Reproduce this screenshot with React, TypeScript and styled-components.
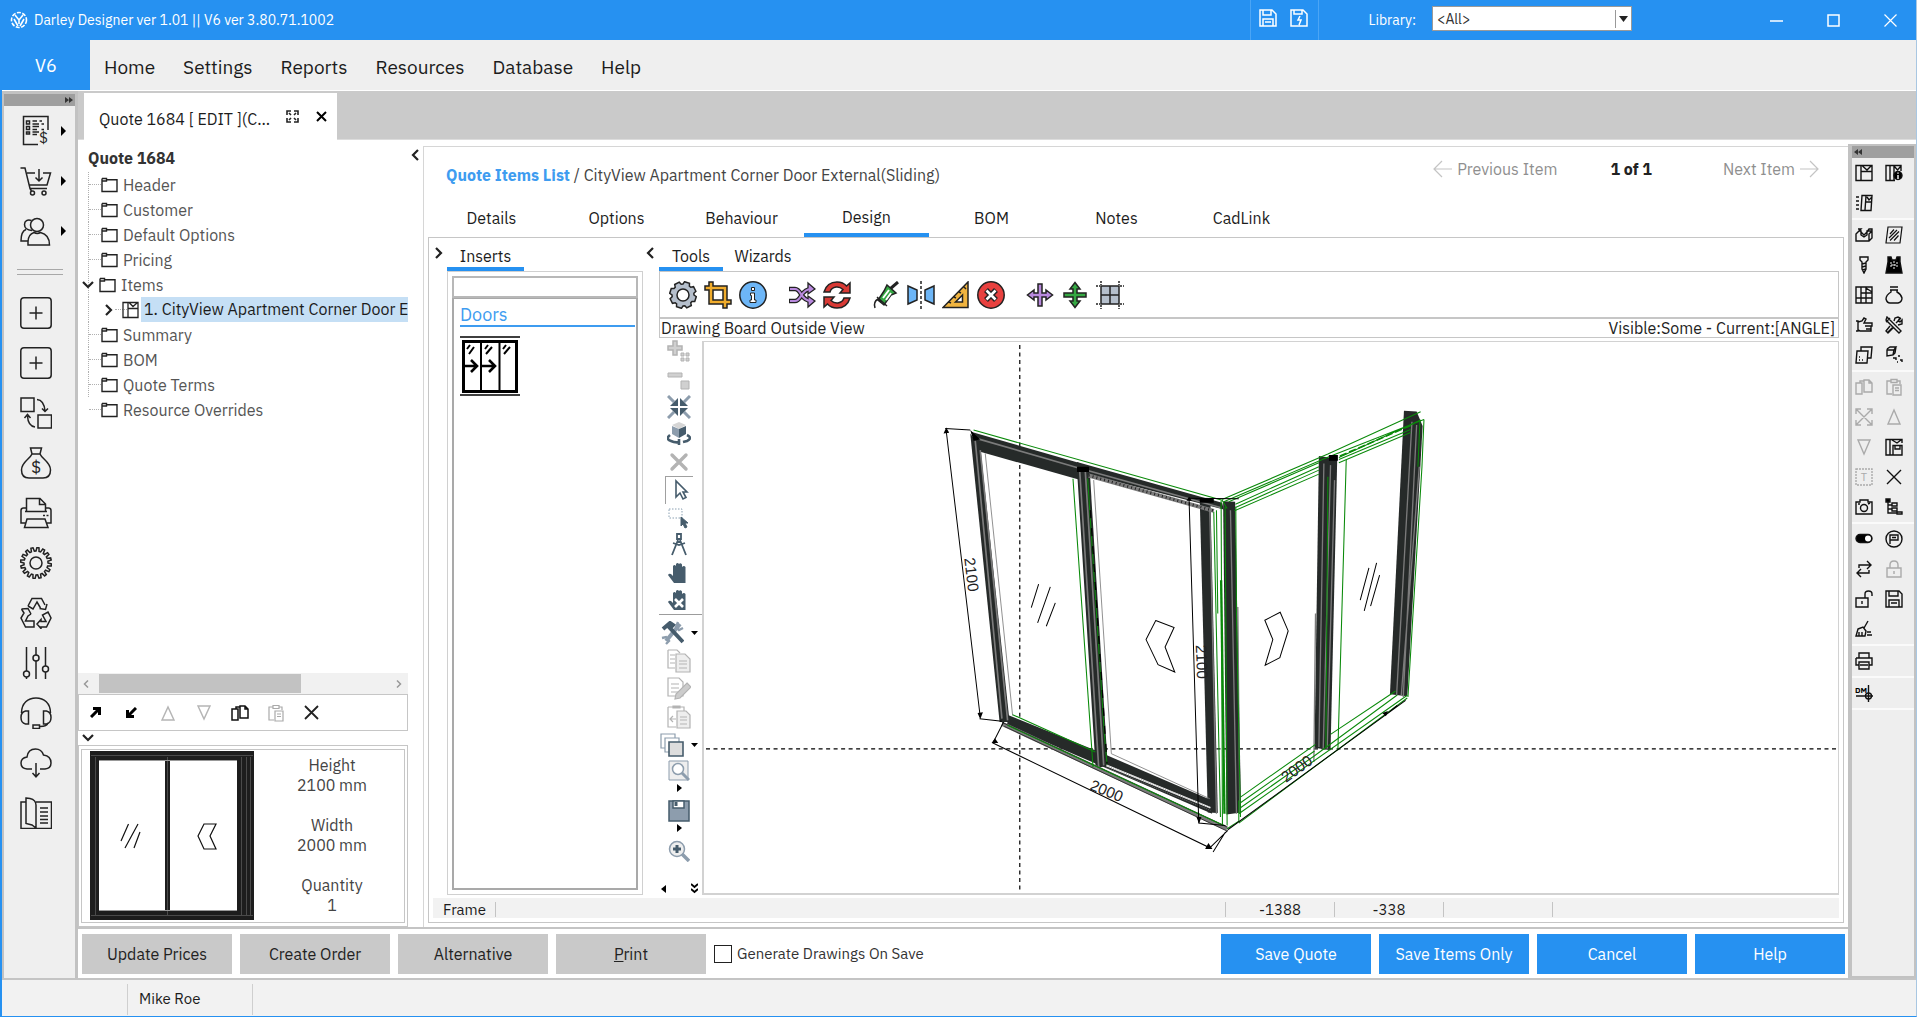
import React from "react";
import styled, { createGlobalStyle, css } from "styled-components";

const blue = "#2691f1";
const rule = "#c6c6c6";
const chrome = "#efefef";
const ink = "#1c1c1c";
const font = `"IBM Plex Sans", Roboto, "Liberation Sans", sans-serif`;

const GlobalStyle = createGlobalStyle`
  * { box-sizing: border-box; }
  body { margin: 0; background: #fff; font-family: ${font}; font-size: 16px; line-height: 20px; color: ${ink}; }
  button, input, select { font: inherit; color: inherit; }
  button { border: 0; padding: 0; background: none; }
  svg { display: block; }
  ul { list-style: none; margin: 0; padding: 0; }
`;

/* ---------- shell ---------- */
const Shell = styled.div`
  min-height: 100vh;
  display: flex;
  flex-direction: column;
  border-left: 2px solid ${blue};
  border-right: 1px solid #a9c7e2;
  border-bottom: 1px solid ${blue};
`;
const TitleBar = styled.header`
  height: 40px;
  background: ${blue};
  color: #fff;
  display: flex;
  align-items: center;
  font-size: 14px;
`;
const AppTitle = styled.div`
  display: flex;
  align-items: center;
  gap: 6px;
  padding-left: 8px;
  flex: 1;
`;
const QuickActions = styled.div`
  height: 40px;
  display: flex;
  align-items: center;
  gap: 13px;
  padding: 0 10px 4px 8px;
  border-left: 1px solid #4ba5f5;
  border-right: 1px solid #4ba5f5;
`;
const LibraryField = styled.label`
  display: flex;
  align-items: center;
  gap: 16px;
  margin: 0 113px 0 49px;
`;
const SelectBox = styled.span`
  display: grid;
  grid-template-columns: 1fr 16px;
  align-items: center;
  width: 200px;
  height: 25px;
  margin-bottom: 3px;
  background: #fff;
  border: 1px solid #9a9a9a;
  color: ${ink};
  svg { grid-area: 1 / 2; pointer-events: none; }
`;
const LibrarySelect = styled.select`
  grid-area: 1 / 1 / 2 / 3;
  appearance: none;
  border: 0;
  background: none;
  height: 23px;
  padding: 0 4px;
  color: #333;
`;
const WindowButtons = styled.div`
  display: flex;
  button { width: 57px; height: 40px; padding-left: 5px; display: grid; place-items: center; }
`;
const MenuBar = styled.nav`
  height: 51px;
  display: flex;
  background: ${chrome};
  border-bottom: 1px solid #fff;
  font-size: 19px;
`;
const Brand = styled.button`
  width: 88px;
  padding-top: 2px;
  background: ${blue};
  color: #fff;
  font-size: 18px;
`;
const MenuList = styled.div`
  display: flex;
  gap: 28px;
  padding: 3px 14px 0;
`;
const Body = styled.div`
  flex: 1;
  display: flex;
`;
const Main = styled.main`
  flex: 1;
  min-width: 0;
  display: flex;
  flex-direction: column;
`;
const Workspace = styled.div`
  flex: 1;
  display: flex;
`;
const Center = styled.div`
  flex: 1;
  min-width: 0;
  display: flex;
  flex-direction: column;
`;
const Panels = styled.div`
  flex: 1;
  display: flex;
`;

/* ---------- rails ---------- */
const LeftRail = styled.aside`
  width: 76px;
  background: ${chrome};
  border: solid #c2c2c2;
  border-width: 3px 3px 0 2px;
`;
const Grip = styled.div<{ $end?: boolean }>`
  height: 12px;
  display: flex;
  align-items: center;
  justify-content: ${(p) => (p.$end ? "flex-end" : "flex-start")};
  padding: 0 2px;
  background: #9f9f9f;
`;
const RailItem = styled.button`
  width: 71px;
  height: 50px;
  display: flex;
  align-items: center;
  gap: 9px;
  padding-left: 16px;
`;
const RailDivider = styled.div`
  height: 6px;
  margin: 13px 12px 13px 13px;
  border: solid #a8a8a8;
  border-width: 1px 0;
`;
const RightRail = styled.aside`
  width: 68px;
  margin-top: 4px;
  background: #eee;
  border: solid #c2c2c2;
  border-width: 2px 2px 2px 4px;
`;
const ToolGroup = styled.div`
  display: grid;
  grid-template-columns: 24px 36px;
  grid-auto-rows: 30px;
  border-bottom: 2px solid #fafafa;
  button { display: grid; place-items: center; }
`;

/* ---------- document tabs ---------- */
const DocTabs = styled.div`
  height: 49px;
  background: #cacaca;
  padding: 2px 0 0 6px;
  border-bottom: 1px solid #dcdcdc;
`;
const DocTab = styled.div`
  width: 253px;
  height: 47px;
  display: flex;
  align-items: center;
  padding: 4px 10px 0 15px;
  background: #fff;
  button { display: grid; place-items: center; }
`;
const DocTitle = styled.span`
  flex: 1;
`;
const DocActions = styled.span`
  display: flex;
  gap: 17px;
  padding-bottom: 4px;
`;

/* ---------- tree panel ---------- */
const TreePanel = styled.section`
  width: 330px;
  display: flex;
  flex-direction: column;
`;
const TreeTitle = styled.h2`
  margin: 0;
  padding: 8px 0 4px 10px;
  font-size: 16px;
  font-weight: 700;
  line-height: 20px;
  color: #333;
`;
const Tree = styled.ul`
  flex: 1;
  padding-left: 10px;
  color: #555;
`;
const TreeRow = styled.li<{ $last?: boolean }>`
  height: 25px;
  display: flex;
  align-items: center;
  gap: 5px;
  border-left: 1px dotted ${(p) => (p.$last ? "transparent" : "#b0b0b0")};
`;
const Twig = styled.span`
  width: 12px;
  height: 0;
  margin-right: -5px;
  border-top: 1px dotted #b0b0b0;
`;
const Expander = styled.button`
  width: 12px;
  margin-left: -7px;
`;
const ChildRow = styled.li`
  height: 25px;
  display: flex;
  align-items: center;
  border-left: 1px dotted #b0b0b0;
  padding-left: 14px;
`;
const ChildLink = styled.span`
  flex: 1;
  height: 25px;
  margin-left: 2px;
  padding-left: 3px;
  line-height: 25px;
  overflow: hidden;
  white-space: nowrap;
  background: #c5dff5;
  color: ${ink};
`;
const ScrollTrack = styled.div`
  height: 21px;
  display: flex;
  align-items: center;
  justify-content: space-between;
  padding: 0 6px 0 5px;
  background: #f1f1f1;
`;
const ScrollThumb = styled.div`
  width: 202px;
  height: 19px;
  margin: 0 auto 0 10px;
  background: #c2c2c2;
`;
const TreeTools = styled.div`
  height: 37px;
  display: flex;
  align-items: center;
  border: 1px solid ${rule};
  button { width: 36px; height: 32px; padding-right: 3px; display: grid; place-items: center; }
`;
const Collapse = styled.button`
  height: 14px;
  width: 20px;
  display: grid;
  place-items: center;
`;
const Preview = styled.div`
  display: flex;
  padding: 3px 2px;
  border: 1px solid ${rule};
`;
const PreviewInner = styled.div`
  flex: 1;
  display: flex;
  padding: 1px 0 2px 8px;
  border: 1px solid ${rule};
`;
const Facts = styled.dl`
  flex: 1;
  margin: 0;
  padding: 4px 0 0 6px;
  text-align: center;
  color: #444;
  dt { line-height: 20px; }
  dd { margin: 0 0 20px; line-height: 20px; }
  dd:last-child { margin: 0; }
`;
const SplitHandle = styled.button<{ $w?: number }>`
  width: ${(p) => p.$w || 15}px;
  height: 30px;
  display: flex;
  align-items: center;
`;

/* ---------- item panel ---------- */
const ItemPanel = styled.section`
  flex: 1;
  min-width: 0;
  margin-top: 6px;
  display: flex;
  flex-direction: column;
  border: solid #d6d6d6;
  border-width: 1px 0 0 1px;
  padding: 0 4px 4px;
`;
const ItemHeader = styled.div`
  display: flex;
  align-items: center;
  justify-content: space-between;
  height: 52px;
  padding: 2px 25px 0 18px;
`;
const Crumb = styled.div`
  padding-top: 1px;
  color: #444;
  a { color: #3e9cf0; font-weight: 700; text-decoration: none; }
`;
const Pager = styled.div`
  display: flex;
  align-items: center;
  gap: 53px;
  padding-bottom: 10px;
  strong { color: #222; padding-right: 18px; }
  button { display: flex; align-items: center; gap: 4px; color: #8f8f8f; }
`;
const ItemTabs = styled.div`
  display: flex;
  height: 38px;
  padding-left: 1px;
`;
const ItemTab = styled.button<{ $on?: boolean }>`
  width: 125px;
  padding-top: ${(p) => (p.$on ? 1 : 3)}px;
  border-bottom: 4px solid ${(p) => (p.$on ? blue : "transparent")};
`;
const ItemBody = styled.div`
  flex: 1;
  display: flex;
  flex-direction: column;
  border: 1px solid ${rule};
  padding: 0 4px 4px;
`;
const DesignArea = styled.div`
  flex: 1;
  display: flex;
`;
const InsertsColumn = styled.section`
  width: 210px;
  display: flex;
`;
const InsertsMain = styled.div`
  flex: 1;
  display: flex;
  flex-direction: column;
`;
const SubTabs = styled.div`
  display: flex;
  height: 33px;
`;
const SubTab = styled.button<{ $on?: boolean; $w: number }>`
  width: ${(p) => p.$w}px;
  padding-top: 6px;
  border-bottom: 4px solid ${(p) => (p.$on ? blue : "transparent")};
`;
const InsertsFrame = styled.div`
  flex: 1;
  display: flex;
  flex-direction: column;
  border: 1px solid #d0d0d0;
  padding: 4px;
`;
const SearchInput = styled.input`
  height: 22px;
  border: 2px solid #b8b8b8;
  width: 100%;
  outline: 0;
`;
const InsertList = styled.div`
  flex: 1;
  border: solid #a9a9a9;
  border-width: 1px 2px 2px;
  padding: 6px 1px 0 6px;
`;
const InsertGroup = styled.h3`
  margin: 0 0 9px;
  font-weight: 400;
  font-size: 18px;
  line-height: 20px;
  color: #3e9cf0;
  border-bottom: 2px solid #3e9cf0;
`;
const BoardColumn = styled.section`
  flex: 1;
  min-width: 0;
  display: flex;
  flex-direction: column;
`;
const ToolStrip = styled.div`
  height: 47px;
  display: flex;
  align-items: center;
  padding: 1px 0 0 5px;
  border: 1px solid ${rule};
  button { width: 35px; height: 40px; display: grid; place-items: center; }
`;
const StripGap = styled.span`
  width: 14px;
`;
const BoardCaption = styled.div`
  display: flex;
  justify-content: space-between;
  height: 20px;
  padding: 0 3px 0 1px;
  line-height: 19px;
  border: 1px solid ${rule};
  color: #222;
`;
const BoardRow = styled.div`
  flex: 1;
  display: flex;
`;
const BoardTools = styled.div`
  width: 43px;
  display: flex;
  flex-direction: column;
`;
const BoardGroup = styled.div<{ $h: number }>`
  height: ${(p) => p.$h}px;
  display: flex;
  flex-direction: column;
`;
const BoardDivider = styled.hr`
  width: 100%;
  margin: 0 0 4px;
  border: 0;
  border-top: 1px solid #9c9c9c;
`;
const BoardTool = styled.button<{ $down?: boolean; $menu?: boolean }>`
  flex: 1;
  display: flex;
  align-items: center;
  justify-content: ${(p) => (p.$menu ? "space-between" : "center")};
  ${(p) =>
    p.$menu
      ? css`padding: 0 4px 0 1px;`
      : css`margin: 0 9px 0 6px;`}
  ${(p) =>
    p.$down &&
    css`
      border: solid #a0a0a0;
      border-width: 1px 0 0 1px;
    `}
`;
const StackTool = styled.button`
  height: 40px;
  display: flex;
  flex-direction: column;
  align-items: center;
  gap: 2px;
  padding-right: 3px;
`;
const BoardFoot = styled.div`
  margin-top: auto;
  height: 13px;
  display: flex;
  justify-content: space-between;
  align-items: center;
  padding: 0 4px 0 2px;
`;
const Board = styled.div`
  flex: 1;
  margin-top: 3px;
  border: solid #d2d2d2;
  border-width: 1px 1px 2px 2px;
  min-width: 0;
  display: flex;
`;
const Readout = styled.div`
  display: flex;
  height: 20px;
  margin-top: 3px;
  background: #f2f2f2;
  font-size: 15px;
`;
const ReadCell = styled.span<{ $w?: number; $rule?: boolean }>`
  ${(p) => (p.$w ? css`width: ${p.$w}px;` : css`flex: 1;`)}
  height: 15px;
  margin-top: 4px;
  line-height: 15px;
  text-align: center;
  border-left: 1px solid ${(p) => (p.$rule ? "#c4c4c4" : "transparent")};
`;

/* ---------- bottom ---------- */
const ButtonBar = styled.footer`
  display: flex;
  align-items: center;
  gap: 8px;
  height: 51px;
  padding: 0 3px 0 4px;
  border-top: 2px solid #c4c4c4;
`;
const BarButton = styled.button<{ $primary?: boolean }>`
  width: 150px;
  height: 40px;
  background: ${(p) => (p.$primary ? blue : "#c9c9c9")};
  color: ${(p) => (p.$primary ? "#fff" : "#222")};
`;
const DrawingsOption = styled.label`
  flex: 1;
  display: flex;
  align-items: center;
  gap: 5px;
  font-size: 15px;
  color: #333;
  input {
    appearance: none;
    width: 18px;
    height: 18px;
    margin: 0;
    border: 1px solid #222;
    background: #fff;
  }
`;
const StatusBar = styled.footer`
  height: 38px;
  display: flex;
  align-items: stretch;
  background: #f2f2f2;
  border-top: 2px solid #c4c4c4;
  padding: 4px 0 1px;
`;
const StatusCell = styled.div<{ $w: number }>`
  width: ${(p) => p.$w}px;
  padding: 5px 11px;
  border-right: 1px solid #cfcfcf;
  font-size: 15px;
`;

/* ---------- drawings ---------- */
type SvgProps = { w?: number; h?: number; vb?: string; sw?: number; c?: string; children?: React.ReactNode };
const Svg = ({ w = 20, h = w, vb, sw = 1.5, c = "#222", children }: SvgProps) => (
  <svg width={w} height={h} viewBox={vb || `0 0 ${w} ${h}`} fill="none" stroke={c} strokeWidth={sw} aria-hidden="true">
    {children}
  </svg>
);
const gear = (cx: number, cy: number, n: number, ro: number, ri: number, duty = 0.5) => {
  const pts: string[] = [];
  for (let i = 0; i < n; i++) {
    const a = (i / n) * Math.PI * 2;
    const s = (Math.PI * 2) / n;
    [[a, ri], [a + s * 0.15, ro], [a + s * (0.15 + duty * 0.7), ro], [a + s * (0.3 + duty * 0.7), ri]].forEach(([t, r]) =>
      pts.push(`${(cx + Math.cos(t) * r).toFixed(2)} ${(cy + Math.sin(t) * r).toFixed(2)}`)
    );
  }
  return `M${pts.join("L")}Z`;
};
const Right = () => <Svg w={5} h={10}><path d="M0 0L5 5L0 10Z" fill="#000" stroke="none" /></Svg>;
const SmallRight = () => <Svg w={5} h={8}><path d="M0 0L5 4L0 8Z" fill="#000" stroke="none" /></Svg>;
const Down = () => <Svg w={7} h={4}><path d="M0 0H7L3.500 4Z" fill="#000" stroke="none" /></Svg>;
const Chevron = ({ d }: { d: "l" | "r" | "d" }) => (
  <Svg w={12} h={12} sw={2.2}>
    <path d={{ l: "M7 1L2 6L7 11", r: "M3 1L8 6L3 11", d: "M1 3L6 8L11 3" }[d]} />
  </Svg>
);
const Folder = () => (
  <Svg w={17} h={16} sw={1.4}><path d="M1 1.500H5.500V4H1M5.500 2.800H16V14.500H1V1.500" /></Svg>
);
const FrameIcon = () => (
  <Svg w={17} h={18} sw={1.3}>
    <path d="M1 1.500H16V16.500H1ZM6 1.500V16.500M6 7.500H16M7.500 2L11 5.500L15 2" />
  </Svg>
);

const railIcons: { label: string; art: React.ReactNode }[] = [
  { label: "Quotes", art: (<><path d="M18 29.500H3.500V1.500H28V15M6.500 6h3v3h-3zM6.500 11.500h3v3h-3zM6.500 17h3v2h-3zM12.500 6H17M12.500 9H19M12.500 11.500H19M12.500 14.500H17M12.500 17H19M12.500 19.500H17M19.500 6H22M21.500 9H24M21.500 14.500H24" /><text x="19" y="28" fontSize="15" fill="#222" stroke="none">$</text></>) },
  { label: "Orders", art: (<><path d="M0.500 3H5L10 23.500H27M7 8H15M23 8H30.500L27 20H9.500M19 4V16M15.500 12.500L19 16L22.500 12.500M10 23.500L11.500 26" /><circle cx="12.500" cy="28" r="2" /><circle cx="24" cy="28" r="2" /></>) },
  { label: "Customers", art: (<><circle cx="17" cy="10" r="6.500" /><path d="M8 30V27C8 21 11 18.500 14 17.500C16 18.600 18.500 18.600 20.500 17.500C27 19 29.500 23 29.500 30Z" /><path d="M12 15.500C6 15 4.500 12 4.500 9.500C4.500 6 7.500 4 11.500 5.500M6 14.500C2 16 1 20 1 26H8" /></>) },
];
const boxPlus = <path d="M4 0.800H28Q31.200 0.800 31.200 4V28Q31.200 31.200 28 31.200H4Q0.800 31.200 0.800 28V4Q0.800 0.800 4 0.800ZM16 9.500V22.500M9.500 16H22.500" />;
const railIcons2: { label: string; art: React.ReactNode }[] = [
  { label: "New quote", art: boxPlus },
  { label: "New order", art: boxPlus },
  { label: "Convert", art: <path d="M1 1H14V14.500H1ZM18 18H31.500V31H18ZM17 2.500Q24 3 25 14M22 11.500L25 14.500L28 11.500M15 30Q8 29 7.500 19M4.500 21L7.500 17.500L10.500 21" /> },
  { label: "Payments", art: (<><path d="M10.500 1H21.500L20 7H12ZM12 7C10 12 1.500 15 1.500 23C1.500 28 4 31 9 31H23C28 31 30.500 28 30.500 23C30.500 15 22 12 20 7" /><text x="16" y="26" fontSize="17" textAnchor="middle" fill="#222" stroke="none">$</text></>) },
  { label: "Print", art: <path d="M6.500 14V1.500H20L25.500 7V14M19.500 1.500V7.500H25.500M6 11H3.500Q1 11 1 13.500V26H6M26 11H28.500Q31 11 31 13.500V26H26M5 14.500H27M7 22H25L28 30.500H4.500ZM23 18.500H25M26.500 18.500H28.500" /> },
  { label: "Settings", art: (<><path d={gear(16, 16, 16, 15.5, 12)} /><circle cx="16" cy="16" r="6" /></>) },
  { label: "Recycle", art: <path d="M8 9L12 1.500H21.500L25 8M8 9L13 12L17 5L20.500 11M27 7L25.500 12.500L19.500 11.500M1.500 12L8 11.500L11 17M11 17L8 19L5.500 24H14V30H5.500L1 21L4 16L1.500 12M21 31.500L17 27L21 22.500V24.500H26L22.500 18L28 15L31 21L26.500 30H21Z" /> },
  { label: "Adjust", art: (<><path d="M6.500 0V24M6.500 30V32M16 0V8M16 14V32M25.500 0V19M25.500 25V32" /><circle cx="6.500" cy="27" r="3" /><circle cx="16" cy="11" r="3" /><circle cx="25.500" cy="22" r="3" /></>) },
  { label: "Support", art: <path d="M1.500 16C1.500 6 8 1 16 1S30.500 6 30.500 16M5.500 14H8.500V27H5.500Q1 26 1 20.500T5.500 14ZM26.500 14H23.500V27H26.500Q31 26 31 20.500T26.500 14ZM28 26Q27 29.500 20 29.500M13 28H19.500V31.500H13Z" /> },
  { label: "Cloud sync", art: <path d="M12 22H7Q1 21.500 1 16Q1 11 7 10Q8 2 15.500 2Q21.500 2 23.500 8Q31 9 31 16Q31 21.500 25 22H20M16 16V29M12.500 26L16 29.800L19.500 26" /> },
  { label: "Catalogue", art: <path d="M6 5H1V31.500H31.500V5H16M6 1L10 1.500Q16 3 16 8V31L12 28Q8 27 6 26.500ZM20 11H28M20 15H28M20 19H28M20 22.500H28M20 26H28" /> },
];

const rt = {
  copy: <path d="M1 5H7V16H1ZM5 5V3H9M9 2H14L17 5V14H9ZM14 2V5H17" />,
  paste: <path d="M6 3H2V16H7M12 3H15V6M6 1.500H12V4.500H6ZM8 7H16V17H8ZM10 10H14M10 12.500H14" />,
};
type RT = { label: string; art?: React.ReactNode; dim?: boolean };
const rightGroups: (RT | null)[][] = [
  [
    { label: "Frame", art: <path d="M1 1.500H17V16.500H1ZM6 1V17M6 7.500H17M7.500 2L12 6L16 2" /> },
    { label: "Frame info", art: <><path d="M10 16.500H1V1.500H16V7M5 1V17M9 1V17M9 2L12.500 6L16 2" /><circle cx="13" cy="11.500" r="4" fill="#000" /><path d="M13 11V15M13 8.500V9.800" stroke="#fff" /></> },
    { label: "Move frame", art: <path d="M1 3H4M1 7H4M1 11H4M1 15H4M6 16.500L7 1.500H17L16 16.500ZM11 2L10 16M11 8H17M12 3L14 6L17 3" /> },
    null,
  ],
  [
    { label: "Profiles", art: <path d="M1 8L4 5H6V9L9 11L12 9V5H17V12L14 15H1ZM6 6L9 9L12 6L14 3H17V5M3 3H6L4 5M14 15V8L17 5" /> },
    { label: "Glass", art: <path d="M3 1H17L15 17H1ZM5 8L9 3.500M4 12L12 4M5 14.500L14 5.500M9 14.500L13.500 9.500" strokeWidth="1.200" /> },
    { label: "Hardware", art: <path d="M5 1H13V4L11 6V13L9 17L7 13V6L5 4ZM7 8L11 7M7 11L11 10M7 14L11 13" /> },
    { label: "Gaskets", art: <><path d="M3 1H6L7 4H11L12 1H15V6L17 17H1L3 6Z" fill="#000" /><path d="M9 5V13M6 9H12M6 6V12M12 6V12" stroke="#eee" strokeWidth="1" strokeDasharray="2 1" /></> },
    { label: "Layout", art: <path d="M1 1H17V17H1ZM6 1V17M11 1V17M1 12H17M6 7H17M11 2L17 6" /> },
    { label: "Costs", art: <path d="M5 1H13M5 4H13M6 4L6 6Q1 9 1 13Q2 17 5 17H13Q17 16 17 12Q16 8 12 6V4" /> },
    { label: "Hand", art: <path d="M3 6L7 5L9 2L11 3L9 7H17V10H11M10 10H16V13H11M16 13V15H5L3 14V6M1 5H3V15H1" /> },
    { label: "Repair", art: <path d="M2 1L16 15L14 17L1 4ZM3 16L8 11M11 7L16 2M9 5L10 2L13 1L15 2L13 5L15 6L17 4V8L13 9M5 10L1 15L3 17L8 12M1 6L5 2" /> },
    { label: "Sheets", art: <path d="M6 5V1H17L16 12H12M2 5H13L12 17H1ZM4 14H5M7 14H8M4 11H5" /> },
    { label: "Parts", art: <path d="M2 3L5 1H11L9 4H2V10L8 9L9 4M11 1L10 7L8 9M8 12H11V14M13 10H15M12 16H13M15 14H17V16" /> },
  ],
  [
    { label: "Copy", dim: true, art: rt.copy },
    { label: "Paste", dim: true, art: rt.paste },
    { label: "Expand", dim: true, art: <path d="M1 1L17 17M17 1L1 17M1 6V1H6M12 1H17V6M17 12V17H12M6 17H1V12" /> },
    { label: "Move up", dim: true, art: <path d="M9 2L15 16H3Z" /> },
    { label: "Move down", dim: true, art: <path d="M9 16L3 2H15Z" /> },
    { label: "Save frame", art: <path d="M17 5V1.500H1V17H8M5 1V17M7 2L12 5L16 2M8 7.500H17V17H8ZM10 8V11H15V8" /> },
    { label: "Text", dim: true, art: <><path d="M1 1H17V17H1Z" strokeDasharray="2 1" /><text x="9" y="13" fontSize="11" textAnchor="middle" fill="#aaa" stroke="none">T</text></> },
    { label: "Delete", art: <path d="M2 2L16 16M16 2L2 16" /> },
    { label: "Camera", art: <><path d="M1 4H5V2H13V4H17V16H1ZM3 6H5" /><circle cx="9" cy="10" r="3.500" /><path d="M13 6L15 5" /></> },
    { label: "Structure", art: <><path d="M3 4V15H12M3 7H7M3 11H7M7 5H12V8H7ZM7 10H12V13H7ZM12 14H17V16H12Z" /><path d="M1 1H5V4H1Z" fill="#000" /></> },
  ],
  [
    { label: "Toggle", art: <><rect x="1" y="4.500" width="16" height="8" rx="4" fill="#000" /><circle cx="13" cy="8.500" r="3" fill="#fff" stroke="none" /></> },
    { label: "Flag", art: <><circle cx="9" cy="9" r="8" /><path d="M5 14V5H13V10H5M7 7.500H11" /></> },
    { label: "Swap", art: <path d="M4 8V5H16M12 1L16 5L12 9M14 10V13H2M6 9L2 13L6 17" /> },
    { label: "Lock", dim: true, art: <path d="M2 8H16V17H2ZM5 8V5Q5 1 9 1T13 5V8M9 11V14" /> },
    { label: "Unlock", art: <path d="M1 8H13V17H1ZM10 8V4Q10 1 13.500 1T17 4V6M7 11V14" /> },
    { label: "Save", art: <path d="M1 1H14L17 4V17H1ZM4 1V6H13V1M4 17V10H14V17M6 13H12" /> },
    { label: "Clear", art: <path d="M13 1L9 8M3 9L8 7L11 11L10 16H1ZM4 16V12M7 16V12M12 12H16M12 15H17" /> },
    null,
  ],
  [{ label: "Print sheet", art: <path d="M4 6V1H14V6M1 6H17V13H14M4 13H1V6M4 10H14V17H4ZM5 13H13" /> }, null],
  [{ label: "Dimensions", art: <><text x="0" y="9" fontSize="8" fontWeight="700" fill="#000" stroke="none">DM</text><path d="M1 12H18M13.500 1V18" /><circle cx="13.500" cy="12" r="3" /></> }, null],
];

const stripIcons: ({ label: string; art: React.ReactNode } | null)[] = [
  { label: "Settings", art: <><path d={gear(14, 14, 8, 13.4, 11, 0.7)} fill="#b5bfcc" /><circle cx="14" cy="14" r="6" fill="#fff" /></> },
  { label: "Crop", art: <path d="M5 1V5H1V9H5V23H19V27H23V23H27V19H23V5H9V1ZM9 9H19V19H9Z" fill="#f0ac2c" fillRule="evenodd" /> },
  { label: "Info", art: <><circle cx="14" cy="14" r="13.200" fill="#6db6f7" /><path d="M11.500 12H15.500V19H17V21.500H11V19H12.500V14.500H11.500ZM12.500 6.500H15.500V9.500H12.500Z" fill="#fff" strokeWidth="1" /></> },
  null,
  { label: "Shuffle", art: <><path d="M1 8H7Q10 8 13 13Q17 20 24 20M1 20H7Q10 20 13 15Q17 8 24 8" strokeWidth="4.500" /><path d="M20 2L27 8L20 13ZM20 15L27 20L20 26Z" fill="#b889dd" strokeWidth="1.300" /><path d="M2 8H7Q10 8 13 13Q17 20 23 20M2 20H7Q10 20 13 15Q17 8 23 8" stroke="#b889dd" strokeWidth="2.200" /></> },
  { label: "Refresh", art: <path d="M1 11Q4 1 14 1Q20 1 23.500 5L27 2V12H17L20 8.500Q17 5.500 13 6Q8 7 7 11ZM27 17Q24 27 14 27Q8 27 4.500 23L1 26V16H11L8 19.500Q11 22.500 15 22Q20 21 21 17Z" fill="#d93a35" /> },
  null,
  { label: "Sealant", art: <><path d="M26 1L18 8" strokeWidth="3" /><path d="M15 4L24 12L19 14L12 24L6 19L12 10Z" fill="#35a843" /><path d="M11 17L17 9M14 19L19 12" stroke="#fff" strokeWidth="2" /><path d="M5 16L15 25M9 21L6 18Q1 21 3 27" /></> },
  { label: "Mirror", art: <><path d="M1 5L10 9V19L1 23ZM27 5L18 9V19L27 23Z" fill="#6db6f7" /><path d="M14 0V28" strokeDasharray="3 2" /></> },
  { label: "Set square", art: <path d="M26 1V26.500H1ZM20.500 14V21H13.500ZM22 6L24 8M17 11L19 12M12 16L14 17M7 21L9 22" fill="#f0b440" fillRule="evenodd" /> },
  { label: "Cancel", art: <><circle cx="14" cy="14" r="13.200" fill="#e8413f" /><path d="M9 9L19 19M19 9L9 19" strokeWidth="5.500" /><path d="M9.500 9.500L18.500 18.500M18.500 9.500L9.500 18.500" stroke="#fff" strokeWidth="2.600" /></> },
  null,
  { label: "Spread horizontally", art: <path d="M12 3H16V12H20V9L26.500 14L20 19V16H16V25H12V16H8V19L1.500 14L8 9V12H12Z" fill="#b889dd" /> },
  { label: "Spread vertically", art: <path d="M3 12V16H12V20H9L14 26.500L19 20H16V16H25V12H16V8H19L14 1.500L9 8H12V12Z" fill="#35a843" /> },
  { label: "Grid", art: <><path d="M5 5H23V23H5Z" fill="#b5bfcc" /><path d="M14 5V23M5 14H23" /><path d="M5 0V4M23 0V4M5 24V28M23 24V28M0 5H4M24 5H28M0 23H4M24 23H28" strokeDasharray="2 1" /></> },
];

const slate = "#465c6c";
const steel = "#8d9dad";
const grey = "#b3b3b3";
const hand = "M7 22L1 14Q2 12 4 13L6 15V5Q7.500 3 9 5V11V3Q10.500 1 12 3V11V3Q13.500 1.500 15 3.500V11V6Q17 4 18.500 6V22Z";
const boardA: { label: string; down?: boolean; art: React.ReactNode }[] = [
  { label: "Add", art: <g stroke={grey} fill="#d0d0d0"><path d="M6 1H10V6H15V10H10V15H6V10H1V6H6Z" /><path d="M14 13h3v3h-3zM19 13h3v3h-3zM14 18h3v3h-3zM19 18h3v3h-3z" strokeWidth="1" /></g> },
  { label: "Remove", art: <g stroke={grey} fill="#d0d0d0"><path d="M1 6H15V10H1ZM14 14H22V22H14Z" strokeWidth="1" /></g> },
  { label: "Fit", art: <><path d="M1 1L7 7M23 1L17 7M1 23L7 17M23 23L17 17" stroke={steel} strokeWidth="3" /><path d="M11 3V11H3ZM13 3V11H21ZM11 21V13H3ZM13 21V13H21Z" fill={slate} stroke="none" /></> },
  { label: "Rotate view", art: <><path d="M12 0L19 3L12 7L5 3Z" fill="#d5d5d5" stroke="none" /><path d="M5 4L12 7V16L5 12Z" fill={steel} stroke="none" /><path d="M19 4L12 7V16L19 12Z" fill={slate} stroke="none" /><path d="M3 13Q-2 17 4 19Q8 21 13 20M20 13Q26 16 20 19L16 20M12 17V23" stroke={slate} strokeWidth="2.600" /></> },
  { label: "Delete", art: <path d="M5 5L19 19M19 5L5 19" stroke={grey} strokeWidth="3.400" strokeLinecap="round" /> },
  { label: "Select", down: true, art: <path d="M8 3V19L12 15L15 21L18 19.500L15 14H19Z" stroke={slate} strokeWidth="1.600" /> },
  { label: "Marquee", art: <><path d="M2 3H15V12H2Z" stroke="#8aa0b2" strokeWidth="1" strokeDasharray="1.500 1.500" /><path d="M14 11V20L16 18L18 22L20 21L18 17H21Z" fill={slate} stroke={slate} strokeWidth="1" /></> },
  { label: "Measure", art: <path d="M10 1H14V6H10ZM11 7L5 22M13 7L19 22M6 10L12 12L18 10M10.500 9H13.500" stroke={slate} strokeWidth="1.800" /> },
  { label: "Pan", art: <path d={hand} fill={slate} stroke="none" /> },
  { label: "Reset pan", art: <><path d={hand} fill={slate} stroke="none" /><path d="M8 11L16 19M16 11L8 19" stroke="#fff" strokeWidth="2.600" /></> },
];
const page = "M1 1H12L16 5V19H1ZM4 7H12M4 11H12M4 15H12";

const Scene = () => {
  const g = "#0a8a0a";
  const dk = "#262a29";
  const md = "#7b7b7b";
  return (
    <svg width="100%" height="100%" viewBox="704 342 1133 549" preserveAspectRatio="xMidYMin meet" fill="none" role="img" aria-label="Corner door, outside view">
      <path d="M1019.500 345V890M706 748.500H1836" stroke="#000" strokeWidth="1.200" strokeDasharray="4 3.500" />
      <g transform="translate(930 400) scale(.33333)" strokeWidth="3.200">
        <g stroke="none" fill={dk}>
          <path d="M122 95L445 188L445 238L150 155Z" />
          <path d="M440 186L875 308L880 328L440 214Z" />
          <path d="M120 100L150 140L238 965L208 965Z" />
          <path d="M440 210L478 208L532 1095L496 1105Z" />
          <path d="M235 945L500 1052L840 1198L845 1240L230 975Z" />
          <path d="M808 300L840 302L862 1238L832 1236Z" />
          <path d="M878 303L914 305L932 1236L888 1242Z" />
          <path d="M1165 168L1220 176L1200 1050L1152 1042Z" />
          <path d="M1420 32L1458 34L1476 78L1430 888L1378 882Z" />
        </g>
        <g stroke={md}>
          <path d="M128 112L450 205L870 322M135 122L215 955M150 150L232 960" strokeWidth="5" />
          <path d="M165 160L247 945M490 240L543 1060L838 1195" strokeWidth="2.500" />
          <path d="M475 226L850 332" strokeWidth="12" />
          <path d="M475 226L850 332" strokeWidth="8" stroke="#222" strokeDasharray="3 9" />
          <path d="M448 210L505 1100M465 215L520 1095" strokeWidth="5" />
          <path d="M215 970L890 1285" strokeWidth="13" />
          <path d="M215 966L890 1280M222 978L890 1292" stroke="#222" strokeWidth="2.500" />
          <path d="M528 1095L840 1222" strokeWidth="5" stroke="#fff" />
          <path d="M528 1095L840 1222M528 1102L840 1230" strokeWidth="2" strokeDasharray="4 3" />
          <path d="M838 330L858 1240M900 330L918 1240M922 620L928 1240M1180 190L1165 1040M1200 195L1178 1045M1212 240L1190 1045" strokeWidth="4" />
          <path d="M1444 65L1398 885M1458 75L1418 890M1466 200L1412 885M1155 640L1150 1085" strokeWidth="4" />
        </g>
        <g stroke={g}>
          <path d="M130 90L875 300L890 325M428 236L488 1100M472 235L522 1000L530 1092M247 943L495 1055M232 975L880 1275" />
          <path d="M850 335L870 1250M858 330L862 640M872 302L876 1275M884 320L890 1275M916 320L918 640L930 1250" />
          <path d="M872 540L882 1240" strokeWidth="7" />
          <path d="M875 298L1192 162L1470 35M880 305L1195 170L1480 58M895 305L1165 188M915 312L1165 200M915 322L1165 210M912 332L1165 222M1225 172L1470 60M1225 178L1440 88M1225 188L1440 97" />
          <path d="M1192 230L1186 1040M1247 180L1222 1050M1480 58L1474 200L1432 890M1468 60L1462 200" />
          <path d="M930 1190L1155 1032M930 1207L1152 1052M1200 1002L1395 872M930 1222L1152 1066L1400 884M925 1240L1430 885M925 1268L1430 893M890 1285L925 1262M925 1200V1265" />
          <path d="M1228 168L1450 72" strokeWidth="5" strokeDasharray="22 8" />
        </g>
        <g stroke="#000" strokeWidth="3">
          <path d="M45 85L120 90M48 92L150 950M148 955L215 963M220 965L188 1028L838 1342L892 1290M848 1355L885 1295M775 294L925 296M776 300L805 1268L885 1275M892 1288L1425 900M1370 940L1400 915" />
          <path d="M480 330L530 1090" strokeDasharray="24 30" strokeWidth="4" />
          <path d="M325 552L303 622M360 560L322 668M375 608L348 678M1315 503L1289 600M1338 488L1301 632M1347 525L1320 618" />
          <path d="M676 661L731 682L704 740L733 815L683 793L647 718ZM1003 660L1049 636L1073 692L1048 772L1004 795L1027 718Z" />
        </g>
        <g fill="#000">
          <path d="M40 100L48 82L57 98ZM142 938L150 957L158 936ZM204 1028L184 1028L194 1014ZM824 1346L846 1346L834 1328ZM798 1250L806 1270L813 1250ZM768 302L776 290L784 302ZM1355 938L1372 932L1366 948ZM440 200H476V216H440ZM808 296H850V308H808ZM120 90L150 118L130 122ZM1195 165H1222V182H1195Z" />
        </g>
        <g fill="#222" fontFamily="Liberation Sans, Arial, sans-serif" fontSize="46" textAnchor="middle">
          <text transform="translate(108 525) rotate(83)">2100</text>
          <text transform="translate(798 785) rotate(88)">2100</text>
          <text transform="translate(523 1186) rotate(22)">2000</text>
          <text transform="translate(1108 1118) rotate(-36)">2000</text>
        </g>
      </g>
    </svg>
  );
};

const PreviewArt = () => (
  <svg width="164" height="169" viewBox="0 0 164 169" role="img" aria-label="Sliding door elevation">
    <path d="M0 0H164V169H0Z" fill="#1d1d1d" />
    <path d="M9 10H75V159H9ZM80 10H147V159H80Z" fill="#fff" />
    <g fill="none" stroke="#4a4a4a">
      <path d="M1 4.500H163M5.500 6V165M77.500 6V164M151.500 6V165M156.500 6V165M160.500 6V165M1 164.500H163" />
      <path d="M9 9.500H147M9 159.500H147" stroke="#999" />
    </g>
    <path d="M38.500 73L31 90M48 73L35 97M50 81L44 97M114 73H126L120 85L126 98H114L108 85Z" fill="none" stroke="#111" strokeWidth="1.200" />
  </svg>
);

const treeItems = ["Header", "Customer", "Default Options", "Pricing", "Items", "Summary", "BOM", "Quote Terms", "Resource Overrides"];

export default function App() {
  return (
    <Shell>
      <GlobalStyle />
      <TitleBar>
        <AppTitle>
          <Svg w={18} c="#fff" sw={1.6}>
            <circle cx="9" cy="9" r="7.500" strokeDasharray="4 1.500" />
            <path d="M5 4L9 9L13 4M4 8L8 15M14 8L10 15M9 9V13" />
          </Svg>
          <span>Darley Designer ver 1.01 || V6 ver 3.80.71.1002</span>
        </AppTitle>
        <QuickActions>
          <button aria-label="Save">
            <Svg w={18} c="#fff"><path d="M1 1H13L17 5V17H1ZM4 1V6H12V1M4 17V10H14V17M6 13H12" /></Svg>
          </button>
          <button aria-label="Quick save">
            <Svg w={18} c="#fff"><path d="M1 1H13L17 5V17H1ZM4 1V5H12V1M10 7L8 11H11L9 16" /></Svg>
          </button>
        </QuickActions>
        <LibraryField>
          Library:
          <SelectBox>
            <LibrarySelect defaultValue="all"><option value="all">&lt;All&gt;</option></LibrarySelect>
            <Svg w={16} h={20}><path d="M0.500 1V19" stroke="#999" strokeWidth="1" /><path d="M4 7H13L8.500 13Z" fill="#222" stroke="none" /></Svg>
          </SelectBox>
        </LibraryField>
        <WindowButtons>
          <button aria-label="Minimise"><Svg w={13} c="#fff"><path d="M0 7H13" /></Svg></button>
          <button aria-label="Maximise"><Svg w={13} c="#fff"><path d="M1 1H12V12H1Z" /></Svg></button>
          <button aria-label="Close"><Svg w={13} c="#fff" sw={1.2}><path d="M0.500 0.500L12.500 12.500M12.500 0.500L0.500 12.500" /></Svg></button>
        </WindowButtons>
      </TitleBar>
      <MenuBar>
        <Brand>V6</Brand>
        <MenuList>
          {["Home", "Settings", "Reports", "Resources", "Database", "Help"].map((m) => <button key={m}>{m}</button>)}
        </MenuList>
      </MenuBar>
      <Body>
        <LeftRail>
          <Grip $end><Svg w={8} h={6}><path d="M0 0L4 3L0 6ZM4 0L8 3L4 6Z" fill="#333" stroke="none" /></Svg></Grip>
          {railIcons.map((i) => (
            <RailItem key={i.label} aria-label={i.label}><Svg w={32}>{i.art}</Svg><Right /></RailItem>
          ))}
          <RailDivider />
          {railIcons2.map((i) => (
            <RailItem key={i.label} aria-label={i.label}><Svg w={32}>{i.art}</Svg></RailItem>
          ))}
        </LeftRail>
        <Main>
          <DocTabs>
            <DocTab>
              <DocTitle>Quote 1684 [ EDIT ](C...</DocTitle>
              <DocActions>
                <button aria-label="Expand">
                  <Svg w={13} sw={1.6}><path d="M1 5V1H5M8 1H12V5M12 8V12H8M5 12H1V8M3 3L5 5M10 3L8 5M3 10L5 8M10 10L8 8" /></Svg>
                </button>
                <button aria-label="Close tab"><Svg w={11} sw={2} c="#000"><path d="M1 1L10 10M10 1L1 10" /></Svg></button>
              </DocActions>
            </DocTab>
          </DocTabs>
          <Workspace>
            <Center>
              <Panels>
                <TreePanel>
                  <TreeTitle>Quote 1684</TreeTitle>
                  <Tree>
                    {treeItems.map((t, n) => (
                      <React.Fragment key={t}>
                        <TreeRow $last={n === treeItems.length - 1}>
                          {t === "Items" ? <Expander aria-label="Collapse Items"><Chevron d="d" /></Expander> : <Twig />}
                          <Folder />
                          {t}
                        </TreeRow>
                        {t === "Items" && (
                          <ChildRow>
                            <button aria-label="Expand item"><Chevron d="r" /></button>
                            <Twig />
                            <FrameIcon />
                            <ChildLink>1. CityView Apartment Corner Door E</ChildLink>
                          </ChildRow>
                        )}
                      </React.Fragment>
                    ))}
                  </Tree>
                  <ScrollTrack>
                    <Svg w={6} h={8} c="#999"><path d="M5 0.500L1.500 4L5 7.500" /></Svg>
                    <ScrollThumb />
                    <Svg w={6} h={8} c="#999"><path d="M1 0.500L4.500 4L1 7.500" /></Svg>
                  </ScrollTrack>
                  <TreeTools>
                    <button aria-label="Pop out"><Svg w={11} sw={3} c="#000"><path d="M1 10L9 2M3 1.500H9.500V8" /></Svg></button>
                    <button aria-label="Pop in"><Svg w={11} sw={3} c="#000"><path d="M10 1L2 9M1.500 3V9.500H8" /></Svg></button>
                    <button aria-label="Move up"><Svg w={14} h={16} c="#b5b5b5"><path d="M7 2L13 15H1Z" /></Svg></button>
                    <button aria-label="Move down"><Svg w={14} h={16} c="#b5b5b5"><path d="M7 14L1 1H13Z" /></Svg></button>
                    <button aria-label="Copy"><Svg w={18} c="#111">{rt.copy}</Svg></button>
                    <button aria-label="Paste"><Svg w={18} c="#aaa" sw={1.2}>{rt.paste}</Svg></button>
                    <button aria-label="Delete"><Svg w={15} sw={1.8}><path d="M1 1L14 14M14 1L1 14" /></Svg></button>
                  </TreeTools>
                  <Collapse aria-label="Collapse preview"><Chevron d="d" /></Collapse>
                  <Preview>
                    <PreviewInner>
                      <PreviewArt />
                      <Facts>
                        <dt>Height</dt><dd>2100 mm</dd>
                        <dt>Width</dt><dd>2000 mm</dd>
                        <dt>Quantity</dt><dd>1</dd>
                      </Facts>
                    </PreviewInner>
                  </Preview>
                </TreePanel>
                <SplitHandle aria-label="Collapse tree"><Svg w={15} h={12} sw={2.2}><path d="M10 1L5 6L10 11" /></Svg></SplitHandle>
                <ItemPanel>
                  <ItemHeader>
                    <Crumb><a href="#items">Quote Items List</a> / CityView Apartment Corner Door External(Sliding)</Crumb>
                    <Pager>
                      <button>
                        <Svg w={20} h={18} c="#c4c4c4" sw={1.2}><path d="M9 1L1 9L9 17M1 9H19" /></Svg>
                        Previous Item
                      </button>
                      <strong>1 of 1</strong>
                      <button>
                        Next Item
                        <Svg w={20} h={18} c="#c4c4c4" sw={1.2}><path d="M11 1L19 9L11 17M19 9H1" /></Svg>
                      </button>
                    </Pager>
                  </ItemHeader>
                  <ItemTabs>
                    {["Details", "Options", "Behaviour", "Design", "BOM", "Notes", "CadLink"].map((t) => (
                      <ItemTab key={t} $on={t === "Design"}>{t}</ItemTab>
                    ))}
                  </ItemTabs>
                  <ItemBody>
                    <DesignArea>
                      <InsertsColumn>
                        <SplitHandle $w={14} aria-label="Show inserts"><Chevron d="r" /></SplitHandle>
                        <InsertsMain>
                          <SubTabs><SubTab $on $w={77}>Inserts</SubTab></SubTabs>
                          <InsertsFrame>
                            <SearchInput aria-label="Search inserts" />
                            <InsertList>
                              <InsertGroup>Doors</InsertGroup>
                              <button aria-label="Three panel sliding door">
                                <Svg w={60} c="#000" sw={1.5}>
                                  <path d="M0 1H60M0 59H60" />
                                  <path d="M3.500 5.500H56.500V55.500H3.500Z" strokeWidth="3" />
                                  <path d="M21 5V56M39.500 5V56" strokeWidth="2" />
                                  <path d="M3 30H17M11 24L17 30L11 36M21 30H35M29 24L35 30L29 36" strokeWidth="2.600" />
                                  <path d="M9 18L14 11M7 13L10 9M26 18L32 11M25 13L28 9M44 18L50 11M43 13L46 9" strokeWidth="2" />
                                </Svg>
                              </button>
                            </InsertList>
                          </InsertsFrame>
                        </InsertsMain>
                      </InsertsColumn>
                      <SplitHandle $w={16} aria-label="Hide inserts"><Svg w={15} h={12} sw={2.2}><path d="M10 1L5 6L10 11" /></Svg></SplitHandle>
                      <BoardColumn>
                        <SubTabs>
                          <SubTab $on $w={64}>Tools</SubTab>
                          <SubTab $w={80}>Wizards</SubTab>
                        </SubTabs>
                        <ToolStrip>
                          {stripIcons.map((i, n) =>
                            i ? (
                              <button key={n} aria-label={i.label}><Svg w={28}>{i.art}</Svg></button>
                            ) : (
                              <StripGap key={n} />
                            )
                          )}
                        </ToolStrip>
                        <BoardCaption>
                          <span>Drawing Board Outside View</span>
                          <span>Visible:Some - Current:[ANGLE]</span>
                        </BoardCaption>
                        <BoardRow>
                          <BoardTools>
                            <BoardGroup $h={276}>
                              {boardA.map((i) => (
                                <BoardTool key={i.label} aria-label={i.label} $down={i.down}>
                                  <Svg w={24}>{i.art}</Svg>
                                </BoardTool>
                              ))}
                            </BoardGroup>
                            <BoardDivider />
                            <BoardGroup $h={140}>
                              <BoardTool $menu aria-label="Workshop">
                                <Svg w={24} c={slate}><path d="M20 3L6 20" stroke={steel} strokeWidth="4" /><path d="M3 8L10 2L13 4L10 7L23 21" strokeWidth="4" /><path d="M18 1L16 6L19 9L23 7M2 17L6 16L9 20L6 23" stroke={steel} strokeWidth="2.400" /></Svg>
                                <Down />
                              </BoardTool>
                              <BoardTool aria-label="Copy"><Svg w={24} c={grey} sw={1.2}><path d="M1 1H10L13 4M1 1V19H8M3 6H8M3 10H8M3 14H8" /><path d="M9 5H18L23 10V23H9ZM12 12H20M12 15H20M12 19H20" fill="#eee" /></Svg></BoardTool>
                              <BoardTool aria-label="Edit"><Svg w={24} c={grey} sw={1.2}><path d={page} /><path d="M20 6L24 10L13 21L8 22L9 17Z" fill="#ccc" /></Svg></BoardTool>
                              <BoardTool aria-label="Paste"><Svg w={24} c={grey} sw={1.2}><path d="M1 2H17V7M1 2V22H9M6 1H13V3H6ZM9 14H3M6 11L3 14L6 17" /><path d="M10 6H19L23 10V23H10ZM13 12H20M13 15H20M13 19H20" fill="#eee" /></Svg></BoardTool>
                              <BoardTool $menu aria-label="Layers">
                                <Svg w={24} c={steel} sw={1.2}><path d="M1 1H15V15H1Z" /><path d="M5 5H19V19H5Z" fill="#fff" /><path d="M9 9H23V23H9Z" fill="#ddd" stroke={slate} strokeWidth="1.600" /></Svg>
                                <Down />
                              </BoardTool>
                            </BoardGroup>
                            <StackTool aria-label="Inspect">
                              <Svg w={22} h={23} c={steel}><path d="M1 2H20V21H1Z" fill="#eee" strokeWidth="1" /><circle cx="10" cy="10" r="5.500" fill="#fff" /><path d="M14 14L21 21" strokeWidth="3" /></Svg>
                              <SmallRight />
                            </StackTool>
                            <StackTool aria-label="Save drawing">
                              <Svg w={22} h={23} c={slate}><path d="M1 2H21V22H1Z" fill={steel} /><path d="M5 2V9H16V2Z" fill="#fff" /><path d="M8 3V7" strokeWidth="3" /></Svg>
                              <SmallRight />
                            </StackTool>
                            <StackTool aria-label="Zoom in">
                              <Svg w={22} h={23} c={steel}><circle cx="9" cy="10" r="7.500" fill="#eee" /><path d="M14 15L21 22" strokeWidth="3.500" /><path d="M5 10H13M9 6V14" stroke={slate} strokeWidth="3" /></Svg>
                            </StackTool>
                            <BoardFoot>
                              <Svg w={6} h={8}><path d="M5 0V8L0 4Z" fill="#000" stroke="none" /></Svg>
                              <Svg w={7} h={11} c="#000" sw={1.8}><path d="M0 1L3.500 4L7 1M0 6L3.500 9L7 6" /></Svg>
                            </BoardFoot>
                          </BoardTools>
                          <Board><Scene /></Board>
                        </BoardRow>
                      </BoardColumn>
                    </DesignArea>
                    <Readout>
                      <ReadCell $w={62}>Frame</ReadCell>
                      <ReadCell $rule />
                      <ReadCell $rule $w={109}>-1388</ReadCell>
                      <ReadCell $rule $w={109}>-338</ReadCell>
                      <ReadCell $rule $w={109} />
                      <ReadCell $rule $w={287} />
                    </Readout>
                  </ItemBody>
                </ItemPanel>
              </Panels>
              <ButtonBar>
                <BarButton>Update Prices</BarButton>
                <BarButton>Create Order</BarButton>
                <BarButton>Alternative</BarButton>
                <BarButton><u>P</u>rint</BarButton>
                <DrawingsOption><input type="checkbox" />Generate Drawings On Save</DrawingsOption>
                <BarButton $primary>Save Quote</BarButton>
                <BarButton $primary>Save Items Only</BarButton>
                <BarButton $primary>Cancel</BarButton>
                <BarButton $primary>Help</BarButton>
              </ButtonBar>
            </Center>
            <RightRail>
              <Grip><Svg w={8} h={6}><path d="M4 0L0 3L4 6ZM8 0L4 3L8 6Z" fill="#333" stroke="none" /></Svg></Grip>
              {rightGroups.map((grp, n) => (
                <ToolGroup key={n}>
                  {grp.map((i, k) =>
                    i ? (
                      <button key={k} aria-label={i.label}><Svg w={18} c={i.dim ? "#aaa" : "#111"} sw={1.4}>{i.art}</Svg></button>
                    ) : (
                      <span key={k} />
                    )
                  )}
                </ToolGroup>
              ))}
            </RightRail>
          </Workspace>
        </Main>
      </Body>
      <StatusBar>
        <StatusCell $w={126} />
        <StatusCell $w={125}>Mike Roe</StatusCell>
      </StatusBar>
    </Shell>
  );
}
